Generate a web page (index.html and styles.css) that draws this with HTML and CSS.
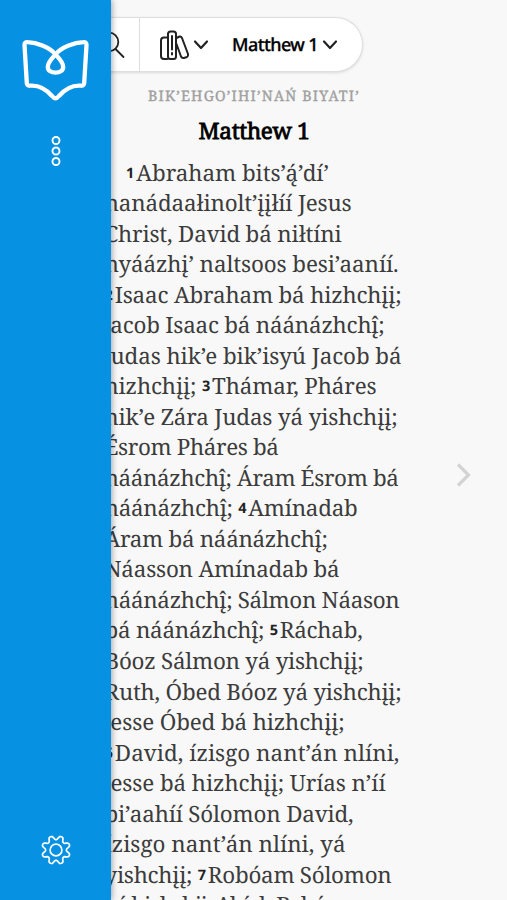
FILE: index.html
```
<!DOCTYPE html>
<html lang="apw">
<head>
<meta charset="utf-8">
<title>Matthew 1</title>
<link rel="stylesheet" href="styles.css">
</head>
<body>
<aside class="sidebar">
  <svg class="logo" width="70" height="66" viewBox="0 0 70 66"><path d="M35.500 16.500C30 9.500 17 4.500 7.500 4.200Q4.300 4 4.500 7L6.800 45Q7 48 10 47.700C18 47 26 51 32 58Q35.500 62.500 39 58C45 51 53 47 61 47.700Q64 48 64.200 45L66.500 7Q66.700 4 63.500 4.200C54 4.500 41 9.500 35.500 16.500C31 21 27.800 25.500 27.800 29C27.800 33 31.500 34.600 35.500 34.600C39.500 34.600 43.200 33 43.200 29C43.200 25.500 40 21 35.500 16.500Z"/></svg>
  <svg class="dots" width="12" height="32" viewBox="0 0 12 32"><circle cx="6" cy="5.500" r="3.500"/><circle cx="6" cy="16" r="3.500"/><circle cx="6" cy="26.500" r="3.500"/></svg>
  <svg class="gear" width="32" height="32" viewBox="0 0 32 32"><circle cx="16" cy="16" r="5.900"/><path id="gear-rim"/></svg>
</aside>
<main class="reader">
  <header class="toolbar">
    <div class="search"><svg width="32" height="32" viewBox="0 0 32 32"><circle cx="11" cy="14" r="9.300"/><path d="M17.500 21L25.500 29"/></svg></div>
    <div class="picker">
      <svg class="books" width="31" height="32" viewBox="0 0 31 32"><path d="M8 8.500H5Q2 8.500 2 11.500V27Q2 30 5 30H8M9 5Q9 2.500 11.500 2.500H14.500Q17 2.500 17 5V27.500Q17 30 14.500 30H11.500Q9 30 9 27.500ZM13 7V20.500M13 24V25.500M17.500 9L20.500 7.500Q22 7 23 9L29 25Q29.500 27 28 28L25 29Q23 29.500 22 27.500L17.500 15"/></svg>
      <svg class="chev" width="16" height="12" viewBox="0 0 16 12"><path d="M2 2.500L8 9L14 2.500"/></svg>
      <span class="book-name"><span data-w="86">Matthew 1</span></span>
      <svg class="chev" width="16" height="12" viewBox="0 0 16 12"><path d="M2 2.500L8 9L14 2.500"/></svg>
    </div>
  </header>
  <div class="collection"><span data-w="212">BIK’EHGO’IHI’NAŃ BIYATI’</span></div>
  <h1><span data-w="111">Matthew 1</span></h1>
  <article>
    <p class="first"><span data-w="203"><sup>1</sup>Abraham bits’ą́’dí’</span></p>
    <p><span data-w="247">nanádaałinolt’įįłíí Jesus</span></p>
    <p><span data-w="237">Christ, David bá niłtíni</span></p>
    <p><span data-w="294">nyáázhį’ naltsoos besi’aaníí.</span></p>
    <p><span data-w="297"><sup>2</sup>Isaac Abraham bá hizhchįį;</span></p>
    <p class="hang"><span data-w="282">Jacob Isaac bá náánázhchį̂;</span></p>
    <p class="hang"><span data-w="299">Judas hik’e bik’isyú Jacob bá</span></p>
    <p><span data-w="272">hizhchįį; <sup>3</sup>Thámar, Pháres</span></p>
    <p><span data-w="293">hik’e Zára Judas yá yishchįį;</span></p>
    <p><span data-w="174">Ésrom Pháres bá</span></p>
    <p><span data-w="294">náánázhchį̂; Áram Ésrom bá</span></p>
    <p><span data-w="253">náánázhchį̂; <sup>4</sup>Amínadab</span></p>
    <p><span data-w="223">Áram bá náánázhchį̂;</span></p>
    <p><span data-w="235">Náasson Amínadab bá</span></p>
    <p><span data-w="295">náánázhchį̂; Sálmon Náason</span></p>
    <p><span data-w="258">bá náánázhchį̂; <sup>5</sup>Ráchab,</span></p>
    <p><span data-w="259">Bóoz Sálmon yá yishchįį;</span></p>
    <p><span data-w="297">Ruth, Óbed Bóoz yá yishchįį;</span></p>
    <p class="hang"><span data-w="242">Jesse Óbed bá hizhchįį;</span></p>
    <p><span data-w="295"><sup>6</sup>David, ízisgo nant’án nlíni,</span></p>
    <p class="hang"><span data-w="283">Jesse bá hizhchįį; Urías n’íí</span></p>
    <p><span data-w="249">bi’aahíí Sólomon David,</span></p>
    <p><span data-w="241">ízisgo nant’án nlíni, yá</span></p>
    <p><span data-w="287">yishchįį; <sup>7</sup>Robóam Sólomon</span></p>
    <p><span data-w="251">yá hizhchįį; Abíah Robóam</span></p>
  </article>
</main>
<svg class="next" width="18" height="28" viewBox="0 0 18 28"><path d="M4 3.500L14.500 14L4 24.500"/></svg>
<script src="script.js"></script>
</body>
</html>
```
FILE: styles.css
```
* { box-sizing: border-box; }
body { margin: 0; height: 900px; overflow: hidden; background: #f8f8f8; position: relative; text-rendering: geometricPrecision; }
svg { fill: none; stroke: #222; stroke-linecap: round; stroke-linejoin: round; flex: none; }
.sidebar { position: absolute; z-index: 2; left: 0; top: 0; width: 111px; height: 900px; background: #0791e3; box-shadow: 1px 0 6px rgba(0,0,0,.35); display: flex; flex-direction: column; align-items: center; padding: 38px 0 34px; }
.sidebar svg { stroke: #fff; }
.logo { stroke-width: 4.300; margin-right: 1.500px; }
.dots { margin-top: 31px; stroke-width: 1.900; }
.gear { margin-top: auto; stroke-width: 1.700; }
.reader { height: 900px; overflow: hidden; padding: 17px 0 0 104.500px; }
.toolbar { width: 258px; height: 55px; display: flex; background: #fff; border: 1px solid #dedede; border-left: 0; border-radius: 0 28px 28px 0; box-shadow: 0 1px 3px rgba(0,0,0,.12); }
.search { width: 35.500px; padding: 10px 0 0; border-right: 1px solid #ddd; display: flex; justify-content: flex-end; }
.search svg { margin-right: 9px; stroke-width: 1.800; }
.picker { display: flex; align-items: center; padding-left: 18.500px; }
.books { stroke-width: 2; }
.chev { stroke-width: 2.200; margin-left: 3px; }
.book-name { width: 87px; margin-left: 23.500px; font: 500 18px/24px "Noto Sans", sans-serif; -webkit-text-stroke: .3px #000; color: #000; white-space: nowrap; }
.collection, h1, article { font-family: "Noto Serif", "Droid Serif", "DejaVu Serif Condensed", "DejaVu Serif", serif; }
.collection { margin-top: 15px; padding-left: 43.500px; font-size: 14.300px; line-height: 20px; color: #a0a0a0; -webkit-text-stroke: .35px #a0a0a0; white-space: nowrap; }
h1 { margin: 12px 0 0 94px; font-size: 22.500px; line-height: 24px; font-weight: 400; -webkit-text-stroke: .8px #000; color: #000; white-space: nowrap; }
article { margin-top: 14.500px; font-size: 22.400px; line-height: 30.540px; color: #3c3c3c; }
p { margin: 0; height: 30.540px; white-space: nowrap; }
.first { padding-left: 21.500px; }
.hang { margin-left: -2px; }
span[data-w] { display: inline-block; }
sup { font: 700 14.500px/1 "Noto Sans", sans-serif; vertical-align: 3px; margin-right: 2px; color: #222; }
.next { position: absolute; left: 453.500px; top: 461px; stroke: #d3d3d3; stroke-width: 3.200; stroke-linecap: butt; stroke-linejoin: miter; }
```
FILE: script.js
```
// Justify each line to its measure by adjusting the tracking.
document.querySelectorAll("[data-w]").forEach(function (line) {
  var count = line.textContent.replace(/[\u0300-\u036f]/g, "").length;
  var width = line.getBoundingClientRect().width;
  line.style.letterSpacing = (Number(line.dataset.w) - width) / count + "px";
});

// Eight-toothed gear rim.
var points = [];
for (var i = 0; i < 96; i++) {
  var a = i / 96 * Math.PI * 2;
  var r = 12.4 + 2 * Math.tanh(1.5 * Math.cos(8 * a + Math.PI)) / Math.tanh(1.5);
  points.push((16 + r * Math.cos(a)).toFixed(2) + " " + (16 + r * Math.sin(a)).toFixed(2));
}
document.getElementById("gear-rim").setAttribute("d", "M" + points.join("L") + "Z");
```
